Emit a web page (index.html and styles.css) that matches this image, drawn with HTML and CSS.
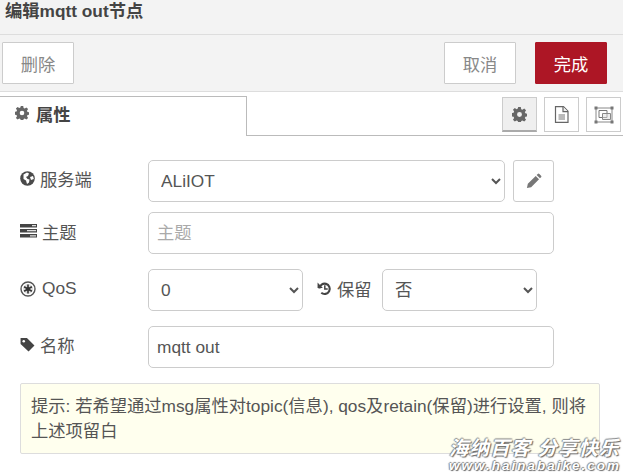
FILE: index.html
```html
<!DOCTYPE html>
<html lang="zh">
<head>
<meta charset="utf-8">
<title>编辑mqtt out节点</title>
<link rel="stylesheet" href="styles.css">
</head>
<body>
<div class="page">
  <header class="title">编辑mqtt out节点</header>
  <div class="toolbar">
    <button class="btn">删除</button>
    <div class="spacer"></div>
    <button class="btn">取消</button>
    <button class="btn primary">完成</button>
  </div>
  <div class="tabs">
    <div class="tab">
      <svg class="ico-tab" viewBox="0 0 14 14"><use href="#gear"/></svg>
      <span>属性</span>
    </div>
    <div class="tabfill">
      <div class="tool active"><svg class="ico-tool" viewBox="0 0 14 14"><use href="#gear"/></svg></div>
      <div class="tool"><svg class="ico-tool doc" viewBox="0 0 15 17"><path d="M1.500.7h8L14 5.200V16.300H1.500z" fill="#fff" stroke="#666" stroke-width="1.200"/><path d="M9 .7V5.700h5" fill="#eee" stroke="#666" stroke-width="1.200"/><path d="M4.500 9h6.500M4.500 11h6.500M4.500 13h6.500" stroke="#777" stroke-width="1.100"/></svg></div>
      <div class="tool"><svg class="ico-tool frame" viewBox="0 0 20 18"><path d="M2 2h16v14H2z" fill="none" stroke="#888"/><path d="M5 4.500h8v7H5z" fill="#fff" stroke="#777"/><path d="M8.500 7.500h8v6h-8z" fill="#ddd" fill-opacity=".5" stroke="#888"/><rect x=".5" y=".5" width="3" height="3" fill="#777"/><rect x="16.500" y=".5" width="3" height="3" fill="#777"/><rect x=".5" y="14.500" width="3" height="3" fill="#777"/><rect x="16.500" y="14.500" width="3" height="3" fill="#777"/></svg></div>
    </div>
  </div>
  <form class="form">
    <div class="row r1">
      <label class="lab"><svg class="ico" viewBox="0 0 15 15"><circle cx="7.500" cy="7.500" r="7.300" fill="#4a4a4a"/><path d="M3.500 3.500l3.500-2 2 1-1 2.500-2 1 1.500 2 2 .5-.5 3-2 1.500-1-3.500-2.500-1.500zM10 6l3-1 .8 3-2.800 1z" fill="#fff"/></svg><span>服务端</span></label>
      <div class="selwrap grow"><select class="ctl sel"><option>ALiIOT</option></select></div>
      <button type="button" class="edit"><svg viewBox="0 0 14 14" class="pencil"><path d="M.8 13.200l.8-3.700 6.900-6.900 2.900 2.900-6.900 6.900zM9.300 1.800l1-1a1 1 0 0 1 1.400 0l1.500 1.500a1 1 0 0 1 0 1.400l-1 1z" fill="#777"/></svg></button>
    </div>
    <div class="row r2">
      <label class="lab"><svg class="ico ico-wide" viewBox="0 0 17 14"><path d="M0 0h17v3.500H0zM0 5h17v3.500H0zM0 10h17v3.500H0z" fill="#444"/><path d="M12 1.700h4M7 6.700h9M10 11.800h6" stroke="#ddd" stroke-width="1.200"/></svg><span>主题</span></label>
      <input class="ctl inp grow" placeholder="主题">
    </div>
    <div class="row r3">
      <label class="lab"><svg class="ico ico-emp" viewBox="0 0 16 16"><circle cx="8" cy="8" r="7" fill="#fff" stroke="#555" stroke-width="1.400"/><circle cx="8" cy="8" r="5" fill="#ddd"/><path d="M8 3.500v9M4.100 5.700l7.800 4.600M11.900 5.700l-7.800 4.600" stroke="#333" stroke-width="1.600"/><circle cx="8" cy="8" r="1.800" fill="#333"/></svg><span>QoS</span></label>
      <select class="ctl sel qos"><option>0</option></select>
      <label class="retain"><svg class="ico2" viewBox="0 0 14 14"><path d="M2.300 7A4.800 4.800 0 1 1 4 11" fill="none" stroke="#444" stroke-width="2"/><path d="M.5 1.500l5 5H.5z" fill="#444"/><path d="M7.300 4v3.500h2.700" fill="none" stroke="#444" stroke-width="1.400"/></svg><span>保留</span></label>
      <select class="ctl sel ret"><option>否</option></select>
    </div>
    <div class="row r4">
      <label class="lab"><svg class="ico" viewBox="0 0 14 14"><path d="M.5 1h6l7 7-5.500 5.500-7.500-7z" fill="#444"/><circle cx="3.500" cy="4" r="1.200" fill="#fff"/></svg><span>名称</span></label>
      <input class="ctl inp grow" value="mqtt out">
    </div>
    <div class="tip">提示: 若希望通过msg属性对topic(信息), qos及retain(保留)进行设置, 则将上述项留白</div>
  </form>
  <div class="mark"><div class="mark-cn">海纳百客 分享快乐</div><div class="mark-en">www.hainabaike.com</div></div>
</div>
<svg class="defs" width="0" height="0"><defs><symbol id="gear" viewBox="0 0 14 14"><path fill-rule="evenodd" d="M5.800 0h2.400l.4 2 1.100.5 1.700-1.100 1.700 1.700-1.100 1.700.5 1.100 2 .4v2.400l-2 .4-.5 1.100 1.100 1.700-1.700 1.700-1.700-1.100-1.100.5-.4 2H5.800l-.4-2-1.100-.5-1.700 1.100-1.700-1.700 1.100-1.700-.5-1.100-2-.4V5.800l2-.4.5-1.100-1.100-1.700 1.700-1.700 1.700 1.100 1.100-.5zM7 4.700a2.300 2.300 0 1 0 0 4.600 2.300 2.300 0 0 0 0-4.600z" fill="#666"/></symbol></defs></svg>
</body>
</html>
```
FILE: styles.css
```css
* { box-sizing: border-box; }
html, body { margin: 0; padding: 0; background: #fff; }
body { font-family: "Liberation Sans", "Noto Sans CJK SC", sans-serif; font-size: 17.300px; color: #555; }
.page { position: relative; width: 623px; height: 474px; overflow: hidden; }
.defs { position: absolute; }
.title { height: 35px; padding: 1px 0 0 5px; background: #f3f3f3; border-bottom: 1px solid #ddd; font-size: 17.300px; font-weight: bold; line-height: 20px; color: #444; }
.toolbar { display: flex; height: 57px; padding: 7px 16px 0 2px; gap: 19px; background: #f3f3f3; border-bottom: 1px solid #ddd; }
.spacer { flex: 1; }
.btn { width: 72px; height: 42px; padding: 0; background: #fff; border: 1px solid #ccc; border-radius: 1px; font: 17.300px "Liberation Sans", "Noto Sans CJK SC", sans-serif; color: #888; }
.primary { background: #ad1625; border-color: #ad1625; color: #fff; }
.tabs { display: flex; height: 44px; }
.tab { display: flex; align-items: center; gap: 7px; width: 247px; height: 40px; margin-top: 4px; padding: 0 0 7px 15px; background: #fff; border: 1px solid #bbb; border-width: 1px 1px 0 0; font-weight: bold; font-size: 17.300px; color: #444; }
.ico-tab { width: 14px; height: 14px; }
.tabfill { flex: 1; display: flex; justify-content: flex-end; gap: 7px; padding: 5px 2px 0 0; border-bottom: 1px solid #bbb; }
.tool { display: flex; align-items: center; justify-content: center; width: 35px; height: 35px; background: #fff; border: 1px solid #ccc; }
.active { background: #efefef; border-bottom: 2px solid #aaa; }
.ico-tool { width: 15px; height: 15px; }
.doc { width: 15px; height: 17px; }
.frame { width: 20px; height: 18px; }
.form { display: block; padding: 0 20px; }
.row { display: flex; align-items: center; }
.r1 { margin: 24px 49px 0 0; gap: 8px; }
.r2 { margin: 10px 49px 0 0; }
.r3 { margin: 15px 0 0 0; }
.r4 { margin: 15px 49px 0 0; }
.lab { display: flex; align-items: center; gap: 5px; width: 128px; flex: none; height: 42px; padding-bottom: 5px; font-size: 17.300px; color: #555; }
.r1 .lab { margin-right: -8px; padding-bottom: 6px; }
.r2 .lab { padding-bottom: 4px; }
.r3 .lab { padding-bottom: 3px; gap: 6px; }
.ico { width: 15px; height: 15px; flex: none; }
.ico-wide { width: 17px; height: 14px; }
.ico-emp { width: 16px; height: 16px; }
.ico2 { width: 15px; height: 15px; flex: none; }
.ctl { height: 42px; background: #fff; border: 1px solid #ccc; border-radius: 5px; font: 17.300px "Liberation Sans", "Noto Sans CJK SC", sans-serif; color: #555; }
.grow { flex: 1; min-width: 0; }
.selwrap { display: flex; }
.sel { width: 100%; padding: 0 0 0 8px; }
.inp { padding: 0 8px; }
.inp::placeholder { color: #aaa; }
.edit { display: flex; align-items: center; justify-content: center; flex: none; width: 41px; height: 42px; padding: 0; background: #fff; border: 1px solid #ccc; border-radius: 3px; }
.pencil { width: 16px; height: 16px; }
.qos { width: 155px; flex: none; }
.retain { display: flex; align-items: center; gap: 5px; margin-left: 14px; width: 65px; height: 42px; flex: none; padding-bottom: 3px; font-size: 17.300px; color: #555; white-space: nowrap; }
.ret { width: 155px; flex: none; }
.tip { width: 580px; height: 71px; margin-top: 15px; padding: 10px; background: #ffffee; border: 1px solid #ddd; border-radius: 2px; font-size: 17.300px; line-height: 25px; color: #555; }
.mark { position: absolute; left: 449px; top: 438px; font-style: italic; font-weight: bold; color: #fff; text-shadow: 1px 1px 1px #666, -1px 0 1px #888, 0 -1px 1px #888; }
.mark-cn { font-size: 19.500px; line-height: 21px; letter-spacing: 1px; white-space: nowrap; }
.mark-en { font-size: 13.500px; line-height: 14px; letter-spacing: 2px; white-space: nowrap; }
```
